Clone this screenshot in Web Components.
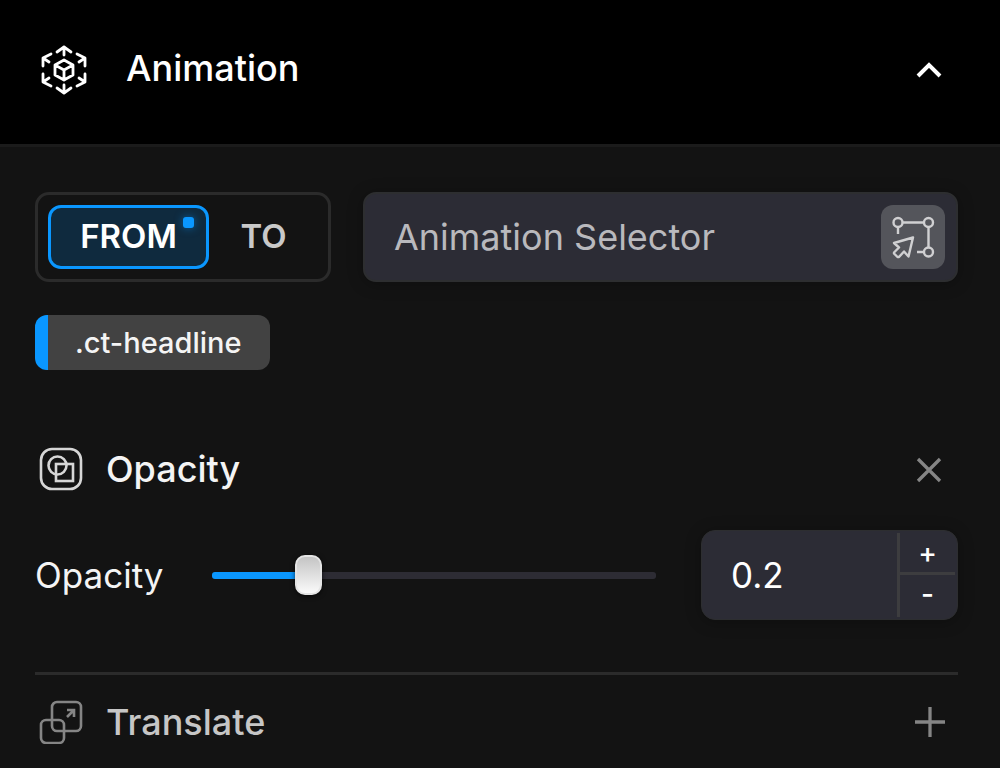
<!DOCTYPE html>
<html lang="en">
<head>
<meta charset="utf-8">
<meta name="viewport" content="width=device-width, initial-scale=1">
<title>Animation</title>
<style>
  html { background: #131313; }
  body {
    margin: 0;
    background: #131313;
    color: #f4f4f4;
    font: 400 35px/44px Inter, "Liberation Sans", sans-serif;
    font-optical-sizing: none;
    --accent: #0a97ff;
    --field: #2c2c35;
    --line: #2b2b2b;
  }
</style>
</head>
<body>
<animation-panel></animation-panel>

<script>
const base = `
  *, *::before, *::after { box-sizing: border-box; }
  :host { box-sizing: border-box; }
  button, input { font: inherit; font-optical-sizing: inherit; color: inherit; margin: 0; }
  button { display: flex; align-items: center; justify-content: center; padding: 0; border: 0; background: none; cursor: pointer; }
  svg { display: block; flex: none; fill: none; stroke: currentColor; }
`;

function define(name, css, html, setup) {
  const template = document.createElement('template');
  template.innerHTML = `<style>${base}${css}</style>${html}`;
  customElements.define(name, class extends HTMLElement {
    constructor() {
      super();
      this.attachShadow({ mode: 'open' }).append(template.content.cloneNode(true));
    }
    connectedCallback() {
      if (setup) setup(this, this.shadowRoot);
    }
  });
}

/* Black title bar with an icon, a title and a collapse button */
define('panel-header', `
  :host { display: flex; align-items: center; height: 147px; padding: 0 41px 4px 38px; background: #000; border-bottom: 3px solid #1b1b1b; color: #fff; }
  h1 { flex: 1; margin: 0 0 4px 36px; font-size: 36px; font-weight: 500; line-height: 44px; }
  button { width: 60px; height: 60px; }
`, `
  <svg width="52" height="52" viewBox="0 0 52 52" stroke-width="2.8" stroke-linecap="round" stroke-linejoin="round" aria-hidden="true">
    <path d="M19 8 26 3l7 5M26 3v8M19 44l7 5 7-5M26 49v-8"/>
    <path d="M5 22v-8l8-4M5 14l6 4M47 22v-8l-8-4M47 14l-6 4M5 30v8l8 4M5 38l6-4M47 30v8l-8 4M47 38l-6-4"/>
    <path d="M26 16l9 5v10l-9 5-9-5v-10zM17 21l9 5 9-5M26 26v10"/>
  </svg>
  <h1><slot></slot></h1>
  <button type="button" aria-label="Collapse" aria-expanded="true">
    <svg width="28" height="20" viewBox="0 0 28 20" stroke-width="4" aria-hidden="true"><path d="M3 16 14 5l11 11"/></svg>
  </button>
`);

/* FROM / TO switch */
define('state-switch', `
  :host { display: flex; width: 296px; height: 90px; padding: 10px; border: 3px solid var(--line); border-radius: 14px; font-size: 33px; font-weight: 600; line-height: 40px; }
  button { position: relative; height: 64px; flex: 1; padding-bottom: 2px; color: #c9c9c9; border-radius: 13px; }
  button[aria-pressed="true"] { flex: none; width: 161px; color: #fff; background: #0f2a3e; border: 3px solid var(--accent); }
  i { position: absolute; top: 9px; right: 12px; width: 11px; height: 11px; border-radius: 3px; background: var(--accent); box-shadow: 0 0 8px #0a97ff80; }
`, `
  <button type="button" aria-pressed="true">FROM<i></i></button>
  <button type="button" aria-pressed="false">TO</button>
`);

/* Text box with an element picker button */
define('selector-field', `
  :host { display: flex; align-items: center; flex: 1; min-width: 0; height: 90px; padding: 0 11px 0 29px; background: var(--field); border: 2px solid #2d2e30; border-radius: 13px; box-shadow: 0 2px 16px #0004; }
  input { flex: 1; min-width: 0; height: 60px; padding: 0; border: 0; outline: 0; background: none; font-size: 36px; }
  input::placeholder { color: #b9b9bd; opacity: 1; }
  button { width: 64px; height: 64px; border-radius: 12px; background: #54555b; color: #d0d0d2; }
`, `
  <input type="text" placeholder="Animation Selector" aria-label="Animation Selector">
  <button type="button" aria-label="Pick element">
    <svg width="64" height="64" viewBox="0 0 64 64" stroke-width="2.4" stroke-linejoin="round" aria-hidden="true">
      <circle cx="17" cy="17.5" r="4.5"/><circle cx="47.5" cy="17.5" r="4.5"/><circle cx="47.5" cy="47" r="4.5"/>
      <path d="M21.5 17.5H43M47.5 22v20.5M17 22v7M36 47h7"/>
      <path d="M32 32.5 13 38l5 4.5-5 5v1l3.500 3.500h1.500l5-5.500 4.500 5z"/>
    </svg>
  </button>
`);

/* Tag with an accent edge */
define('selector-chip', `
  :host { display: flex; width: fit-content; height: 55px; align-items: center; padding: 0 28px 0 27px; border-left: 13px solid var(--accent); border-radius: 12px; background: #424242; font-size: 29px; font-weight: 500; line-height: 36px; }
`, `<slot></slot>`);

/* Section title: icon slot, name, action slot */
define('section-title', `
  :host { display: flex; align-items: center; height: 60px; padding: 0 0 0 4px; }
  h2 { flex: 1; margin: 0 0 0 23px; font-size: 36px; line-height: 44px; font-weight: 500; }
  :host([muted]) h2 { color: #c6c6c6; }
  button { width: 58px; height: 60px; color: #858585; }
`, `
  <slot name="icon"></slot>
  <h2><slot></slot></h2>
  <button type="button">
    <svg width="32" height="32" viewBox="0 0 32 32" stroke-width="3.3" aria-hidden="true"><path/></svg>
  </button>
`, (host, root) => {
  const muted = host.hasAttribute('muted');
  root.querySelector('button').setAttribute('aria-label', muted ? 'Add' : 'Remove');
  root.querySelector('path').setAttribute('d', muted ? 'M17 1v30M2 16h30' : 'M5 6l22 22M27 6 5 28');
});

/* Number box with plus and minus buttons */
define('number-stepper', `
  :host { display: grid; grid-template-columns: 1fr 58px; width: 257px; height: 90px; padding: 2px; background: var(--field); border: 1px solid #2d2e30; border-radius: 14px; box-shadow: 0 2px 16px #0004; }
  input { width: 100%; min-width: 0; padding: 0 0 0 27px; border: 0; outline: 0; background: none; color: #fff; }
  div { display: grid; grid-template-rows: 39px 1fr; border-left: 3px solid #3d3d3f; }
  button { font-size: 28px; font-weight: 500; line-height: 36px; color: #fff; }
  button + button { border-top: 3px solid #3d3d3f; padding-bottom: 4px; }
`, `
  <input type="text" inputmode="decimal" value="0.2" aria-label="Opacity value">
  <div>
    <button type="button" aria-label="Increase">+</button>
    <button type="button" aria-label="Decrease">-</button>
  </div>
`);

/* Label, slider and number box bound together */
define('range-field', `
  :host { display: flex; align-items: center; }
  label { width: 177px; }
  #range { flex: 1; min-width: 0; height: 44px; margin: 0 45px 0 0; appearance: none; background: none; --fill: 20%; }
  #range::-webkit-slider-runnable-track { height: 7px; border-radius: 3px; background: linear-gradient(to right, var(--accent) var(--fill), #2d2c34 var(--fill)); }
  #range::-webkit-slider-thumb { appearance: none; width: 27px; height: 40px; margin-top: -17px; border-radius: 10px; background: linear-gradient(#c4c4c4, #fafafa); border: 2px solid #e4e4e4; box-shadow: 0 1px 5px #000a; }
`, `
  <label for="range"></label>
  <input id="range" type="range" min="0" max="1" step="0.1" value="0.2">
  <number-stepper></number-stepper>
`, (host, root) => {
  root.querySelector('label').textContent = host.getAttribute('label');
  const range = root.querySelector('#range');
  const stepper = root.querySelector('number-stepper').shadowRoot;
  const box = stepper.querySelector('input');
  const sync = value => {
    range.value = value;
    box.value = range.value;
    range.style.setProperty('--fill', range.value * 100 + '%');
  };
  const [plus, minus] = stepper.querySelectorAll('button');
  range.addEventListener('input', () => sync(range.value));
  box.addEventListener('change', () => sync(box.value));
  plus.addEventListener('click', () => sync(+range.value + 0.1));
  minus.addEventListener('click', () => sync(+range.value - 0.1));
});

define('animation-panel', `
  :host { display: block; }
  main { padding: 45px 42px 0 35px; }
  .target { display: flex; gap: 32px; margin-bottom: 33px; }
  .opacity { margin-top: 69px; padding-bottom: 52px; border-bottom: 3px solid var(--line); }
  .opacity svg { color: #d6d6d6; }
  range-field { margin-top: 31px; }
  .translate { padding-top: 17px; }
  .translate svg { color: #858585; }
`, `
  <panel-header>Animation</panel-header>
  <main>
    <div class="target">
      <state-switch></state-switch>
      <selector-field></selector-field>
    </div>
    <selector-chip>.ct-headline</selector-chip>
    <section class="opacity">
      <section-title>
        <svg slot="icon" width="44" height="44" viewBox="0 0 44 44" stroke-width="2.6" aria-hidden="true">
          <rect x="2" y="2" width="40" height="40" rx="11"/><circle cx="18.5" cy="18.5" r="9"/><rect x="17" y="17" width="17" height="17"/>
        </svg>Opacity
      </section-title>
      <range-field label="Opacity"></range-field>
    </section>
    <section class="translate">
      <section-title muted>
        <svg slot="icon" width="44" height="44" viewBox="0 0 44 44" stroke-width="2.6" aria-hidden="true">
          <rect x="13" y="2" width="29" height="29" rx="5"/><rect x="2" y="20" width="23" height="23" rx="5"/><path d="M28 17l7-7M28 10h7v7"/>
        </svg>Translate
      </section-title>
    </section>
  </main>
`);
</script>
</body>
</html>
